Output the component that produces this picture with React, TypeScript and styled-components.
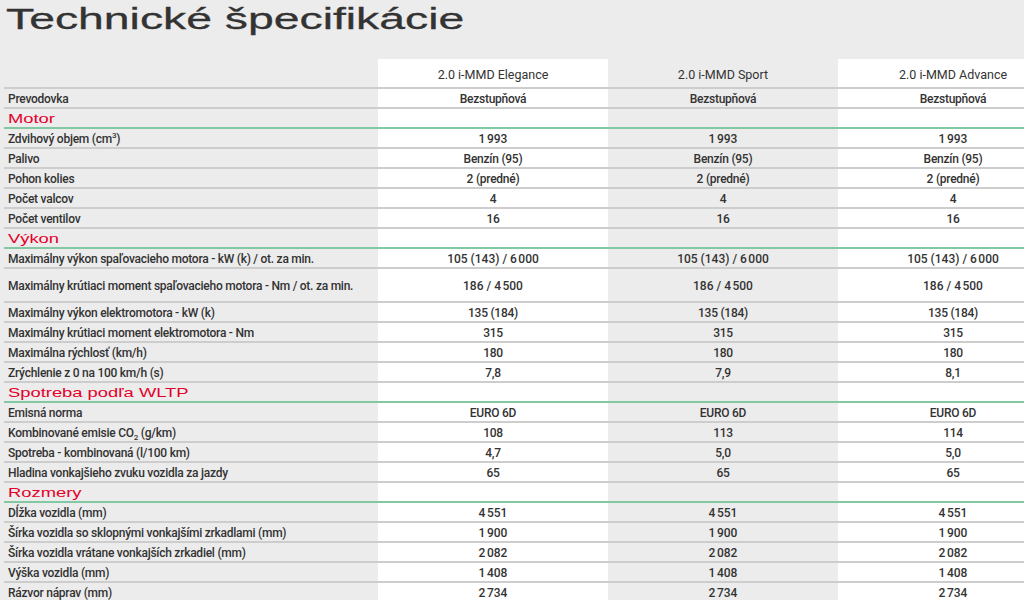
import React from "react";
import styled, { createGlobalStyle } from "styled-components";

const GlobalStyle = createGlobalStyle`
  html, body {
    margin: 0;
    padding: 0;
    background: #ececec;
    overflow: hidden;
  }
  body {
    font-family: Roboto, "Liberation Sans", sans-serif;
    color: #333333;
  }
`;

const Page = styled.div`
  width: 1068px;
  padding-left: 4px;
`;

const Title = styled.h1`
  margin: 0;
  height: 59px;
  padding-left: 2px;
  font-family: "Liberation Sans", Arial, sans-serif;
  font-weight: 400;
  font-size: 29.5px;
  line-height: 37px;
  color: #333333;
  -webkit-text-stroke: 0.3px #333333;
  span {
    display: inline-block;
    transform: scaleX(1.57);
    transform-origin: left center;
  }
`;

const Row = styled.div<{ $tall?: boolean; $section?: boolean; $head?: boolean }>`
  display: grid;
  grid-template-columns: 374px repeat(3, 230px);
  height: ${(p) => (p.$head ? 28 : p.$tall ? 32 : 18)}px;
  border-bottom: 2px solid ${(p) => (p.$section ? "#82c9a3" : "#cdcdcd")};
  font-size: ${(p) => (p.$head ? 12.5 : 12)}px;
  font-weight: ${(p) => (p.$head ? 400 : 500)};
  letter-spacing: ${(p) => (p.$head ? 0 : -0.25)}px;

  & > div:nth-child(2),
  & > div:nth-child(4) {
    background: #ffffff;
  }
`;

const Label = styled.div`
  display: flex;
  align-items: center;
  padding: 2px 0 0 4px;
  white-space: nowrap;
`;

const Heading = styled.div`
  display: flex;
  align-items: center;
  padding: 1px 0 0 4px;
  color: #e4002b;
  font-family: "Liberation Sans", Arial, sans-serif;
  font-size: 13.5px;
  font-weight: 400;
  letter-spacing: 0;
  white-space: nowrap;
  span {
    display: inline-block;
    transform: scaleX(1.36);
    transform-origin: left center;
  }
`;

const Cell = styled.div`
  display: flex;
  align-items: center;
  justify-content: center;
  padding-top: 2px;
  white-space: nowrap;
`;

const Sup = styled.sup`
  font-size: 8px;
  line-height: 0;
`;

const Sub = styled.sub`
  font-size: 8px;
  line-height: 0;
`;

type Spec = { label: React.ReactNode; values: string[]; tall?: boolean };
type Section = { title?: string; rows: Spec[] };

const same = (v: string) => [v, v, v];
const n = (s: string) => s.replace(" ", "\u202F");

const sections: Section[] = [
  { rows: [{ label: "Prevodovka", values: same("Bezstupňová") }] },
  {
    title: "Motor",
    rows: [
      { label: <>Zdvihový objem (cm<Sup>3</Sup>)</>, values: same(n("1 993")) },
      { label: "Palivo", values: same("Benzín (95)") },
      { label: "Pohon kolies", values: same("2 (predné)") },
      { label: "Počet valcov", values: same("4") },
      { label: "Počet ventilov", values: same("16") },
    ],
  },
  {
    title: "Výkon",
    rows: [
      {
        label: "Maximálny výkon spaľovacieho motora - kW (k) / ot. za min.",
        values: same("105 (143) / " + n("6 000")),
      },
      {
        label: "Maximálny krútiaci moment spaľovacieho motora - Nm / ot. za min.",
        values: same("186 / " + n("4 500")),
        tall: true,
      },
      { label: "Maximálny výkon elektromotora - kW (k)", values: same("135 (184)") },
      { label: "Maximálny krútiaci moment elektromotora - Nm", values: same("315") },
      { label: "Maximálna rýchlosť (km/h)", values: same("180") },
      { label: "Zrýchlenie z 0 na 100 km/h (s)", values: ["7,8", "7,9", "8,1"] },
    ],
  },
  {
    title: "Spotreba podľa WLTP",
    rows: [
      { label: "Emisná norma", values: same("EURO 6D") },
      { label: <>Kombinované emisie CO<Sub>2</Sub> (g/km)</>, values: ["108", "113", "114"] },
      { label: "Spotreba - kombinovaná (l/100 km)", values: ["4,7", "5,0", "5,0"] },
      { label: "Hladina vonkajšieho zvuku vozidla za jazdy", values: same("65") },
    ],
  },
  {
    title: "Rozmery",
    rows: [
      { label: "Dĺžka vozidla (mm)", values: same(n("4 551")) },
      { label: "Šírka vozidla so sklopnými vonkajšími zrkadlami (mm)", values: same(n("1 900")) },
      { label: "Šírka vozidla vrátane vonkajších zrkadiel (mm)", values: same(n("2 082")) },
      { label: "Výška vozidla (mm)", values: same(n("1 408")) },
      { label: "Rázvor náprav (mm)", values: same(n("2 734")) },
    ],
  },
];

const models = ["2.0 i-MMD Elegance", "2.0 i-MMD Sport", "2.0 i-MMD Advance"];

const App = () => {
  return (
    <>
      <GlobalStyle />
      <Page>
        <Title>
          <span>Technické špecifikácie</span>
        </Title>
        <Row $head>
          <Label />
          {models.map((m) => (
            <Cell key={m}>{m}</Cell>
          ))}
        </Row>
        {sections.map((s, i) => (
          <React.Fragment key={i}>
            {s.title && (
              <Row $section>
                <Heading>
                  <span>{s.title}</span>
                </Heading>
                <Cell />
                <Cell />
                <Cell />
              </Row>
            )}
            {s.rows.map((r, j) => (
              <Row key={j} $tall={r.tall}>
                <Label>
                  <span>{r.label}</span>
                </Label>
                {r.values.map((v, k) => (
                  <Cell key={k}>{v}</Cell>
                ))}
              </Row>
            ))}
          </React.Fragment>
        ))}
      </Page>
    </>
  );
};

export default App;
